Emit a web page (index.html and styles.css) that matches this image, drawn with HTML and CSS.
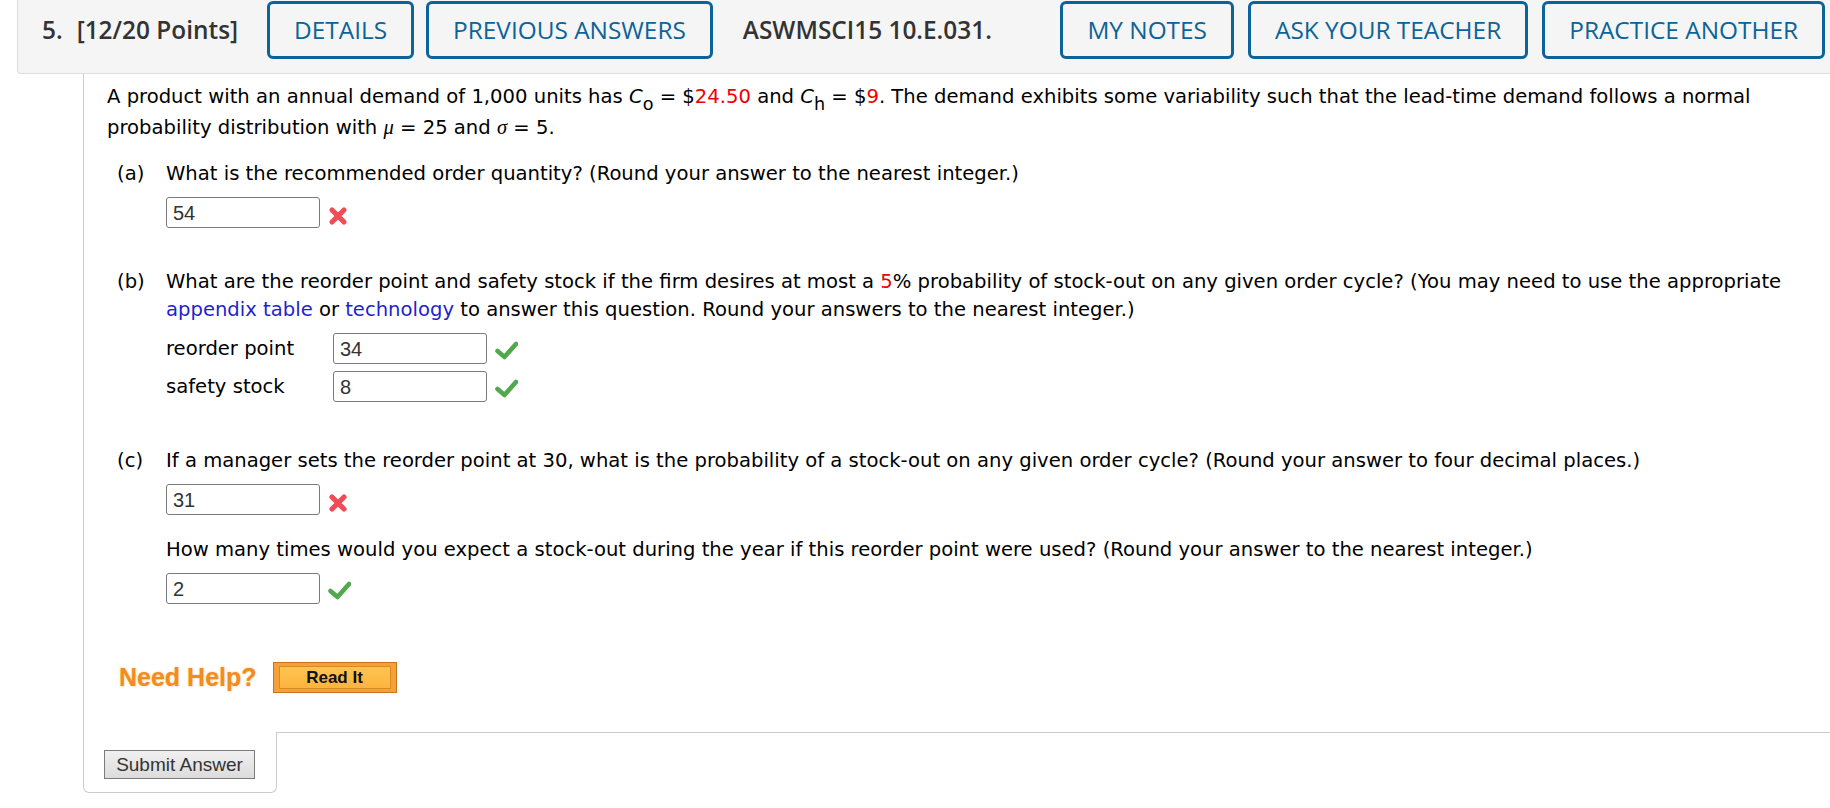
FILE: index.html
```html
<!DOCTYPE html>
<html lang="en">
<head>
<meta charset="utf-8">
<title>Question 5</title>
<link rel="stylesheet" href="styles.css">
</head>
<body>
<header class="qhead">
  <div class="qnum">5.</div>
  <div class="qpts">[12/20 Points]</div>
  <div class="hbtn hbtn-first">DETAILS</div>
  <div class="hbtn hbtn-next">PREVIOUS ANSWERS</div>
  <div class="qcode">ASWMSCI15 10.E.031.</div>
  <div class="hright">
    <div class="hbtn">MY NOTES</div>
    <div class="hbtn">ASK YOUR TEACHER</div>
    <div class="hbtn">PRACTICE ANOTHER</div>
  </div>
</header>

<main class="qbody">
  <p class="intro">A product with an annual demand of 1,000 units has <i class="mvar">C</i><sub class="msub">o</sub> = $<span class="val">24.50</span> and <i class="mvar">C</i><sub class="msub">h</sub> = $<span class="val">9</span>. The demand exhibits some variability such that the lead-time demand follows a normal probability distribution with <i class="greek">μ</i> = 25 and <i class="greek">σ</i> = 5.</p>

  <section class="part part-a">
    <div class="plabel">(a)</div>
    <div class="pcontent">
      <p class="ptext">What is the recommended order quantity? (Round your answer to the nearest integer.)</p>
      <div class="ans">
        <div class="inp">54</div>
        <svg class="icon-x" width="20" height="20" viewBox="0 0 20 20"><path d="M4 4 L16 16 M16 4 L4 16" stroke="#f04b56" stroke-width="5.2" stroke-linecap="round" fill="none"/></svg>
      </div>
    </div>
  </section>

  <section class="part part-b">
    <div class="plabel">(b)</div>
    <div class="pcontent">
      <p class="ptext">What are the reorder point and safety stock if the firm desires at most a <span class="val">5</span>% probability of stock-out on any given order cycle? (You may need to use the appropriate <span class="link">appendix table</span> or <span class="link">technology</span> to answer this question. Round your answers to the nearest integer.)</p>
      <div class="field">
        <div class="flabel">reorder point</div>
        <div class="inp">34</div>
        <svg class="icon-ok" width="23" height="19" viewBox="0 0 23 19"><path d="M2.5 10 L9.5 16 L21 3" stroke="#52a84c" stroke-width="4.6" stroke-linecap="round" stroke-linejoin="round" fill="none"/></svg>
      </div>
      <div class="field">
        <div class="flabel">safety stock</div>
        <div class="inp">8</div>
        <svg class="icon-ok" width="23" height="19" viewBox="0 0 23 19"><path d="M2.5 10 L9.5 16 L21 3" stroke="#52a84c" stroke-width="4.6" stroke-linecap="round" stroke-linejoin="round" fill="none"/></svg>
      </div>
    </div>
  </section>

  <section class="part part-c">
    <div class="plabel">(c)</div>
    <div class="pcontent">
      <p class="ptext">If a manager sets the reorder point at 30, what is the probability of a stock-out on any given order cycle? (Round your answer to four decimal places.)</p>
      <div class="ans">
        <div class="inp">31</div>
        <svg class="icon-x" width="20" height="20" viewBox="0 0 20 20"><path d="M4 4 L16 16 M16 4 L4 16" stroke="#f04b56" stroke-width="5.2" stroke-linecap="round" fill="none"/></svg>
      </div>
      <p class="ptext ptext-sub">How many times would you expect a stock-out during the year if this reorder point were used? (Round your answer to the nearest integer.)</p>
      <div class="ans">
        <div class="inp">2</div>
        <svg class="icon-ok" width="23" height="19" viewBox="0 0 23 19"><path d="M2.5 10 L9.5 16 L21 3" stroke="#52a84c" stroke-width="4.6" stroke-linecap="round" stroke-linejoin="round" fill="none"/></svg>
      </div>
    </div>
  </section>

  <div class="help">
    <span class="help-text">Need Help?</span>
    <span class="readit"><span class="readit-inner">Read It</span></span>
  </div>
</main>

<footer class="qfoot">
  <div class="tab"><button class="submit" type="button">Submit Answer</button></div>
  <div class="fill"></div>
</footer>
</body>
</html>
```
FILE: styles.css
```css
html, body {
  margin: 0;
  padding: 0;
  background: #ffffff;
}

body {
  font-family: "DejaVu Sans", Verdana, sans-serif;
  font-size: 19.6px;
  color: #000000;
}

/* Header bar */
.qhead {
  display: flex;
  align-items: center;
  margin-left: 17px;
  padding: 1px 5px 14px 24px;
  background: #f5f5f5;
  border-left: 1px solid #dddddd;
  border-bottom: 1px solid #dddddd;
  border-bottom-left-radius: 4px;
  font-family: "Open Sans", "Liberation Sans", sans-serif;
  font-size: 24.4px;
  line-height: 1;
  color: #333333;
}

.qnum,
.qpts,
.qcode {
  font-weight: 600;
  white-space: nowrap;
}

.qpts {
  margin-left: 14px;
}

.qcode {
  margin-left: 30px;
}

.hbtn {
  display: flex;
  align-items: center;
  height: 58px;
  box-sizing: border-box;
  padding: 0 24px;
  border: 3px solid #0b6399;
  border-radius: 6px;
  color: #0b6399;
  white-space: nowrap;
}

.hbtn-first {
  margin-left: 29px;
}

.hbtn-next {
  margin-left: 12px;
}

.hright {
  display: flex;
  gap: 14px;
  margin-left: auto;
}

/* Question body */
.qbody {
  margin-left: 83px;
  border-left: 1px solid #cccccc;
  padding: 8px 10px 39px 23px;
}

.intro {
  margin: 0;
  line-height: 30px;
}

.mvar {
  font-style: italic;
}

.msub {
  font-size: 0.9em;
  vertical-align: -0.38em;
  line-height: 0;
}

.greek {
  font-family: "Liberation Serif", "DejaVu Serif", serif;
  font-style: italic;
  font-size: 1.05em;
}

.val {
  color: #ee0000;
}

.link {
  color: #1f1fd0;
}

.part {
  display: flex;
  line-height: 28px;
}

.part-a {
  margin-top: 17px;
}

.part-b {
  margin-top: 40px;
}

.part-c {
  margin-top: 45px;
}

.plabel {
  flex: 0 0 59px;
  box-sizing: border-box;
  padding-left: 10px;
}

.pcontent {
  flex: 1;
  min-width: 0;
}

.ptext {
  margin: 0;
}

.ptext-sub {
  margin-top: 21px;
}

.ans,
.field {
  display: flex;
  align-items: center;
  margin-top: 9px;
}

.field + .field {
  margin-top: 7px;
}

.flabel {
  flex: 0 0 167px;
}

.inp {
  display: flex;
  align-items: center;
  width: 154px;
  height: 31px;
  box-sizing: border-box;
  padding-left: 6px;
  border: 1px solid #7a7a7a;
  border-radius: 3px;
  background: #ffffff;
  font-family: "Liberation Sans", Arial, sans-serif;
  font-size: 20px;
  color: #333333;
}

.icon-x {
  margin-left: 8px;
  margin-top: 6px;
  flex: none;
}

.icon-ok {
  margin-left: 8px;
  margin-top: 4px;
  flex: none;
}

/* Help row */
.help {
  display: flex;
  align-items: center;
  margin-top: 58px;
  margin-left: 12px;
}

.help-text {
  font-family: "Liberation Sans", Arial, sans-serif;
  font-weight: bold;
  font-size: 25px;
  color: #f38b1f;
  text-shadow: 0 0 2px rgba(243, 139, 31, 0.55);
}

.readit {
  display: flex;
  margin-left: 16px;
  width: 124px;
  height: 31px;
  box-sizing: border-box;
  padding: 3px 5px;
  border: 1px solid #c8741f;
  background: #f6a03a;
}

.readit-inner {
  flex: 1;
  display: flex;
  align-items: center;
  justify-content: center;
  border: 1px solid #d98b22;
  background: linear-gradient(#ffc451, #fcb43e);
  font-family: "Liberation Sans", Arial, sans-serif;
  font-weight: bold;
  font-size: 17px;
  color: #111111;
}

/* Footer */
.qfoot {
  display: flex;
  align-items: flex-start;
  margin-left: 83px;
}

.tab {
  border: 1px solid #cccccc;
  border-top: none;
  border-radius: 0 0 6px 6px;
  padding: 18px 21px 13px 20px;
}

.fill {
  flex: 1;
  border-top: 1px solid #cccccc;
}

.submit {
  display: block;
  width: 151px;
  height: 29px;
  margin: 0;
  padding: 0;
  border: 1px solid #7b7b7b;
  border-radius: 0;
  background: linear-gradient(#f0f0f0, #dcdcdc);
  font-family: "Liberation Sans", Arial, sans-serif;
  font-size: 19px;
  color: #333333;
}
```
